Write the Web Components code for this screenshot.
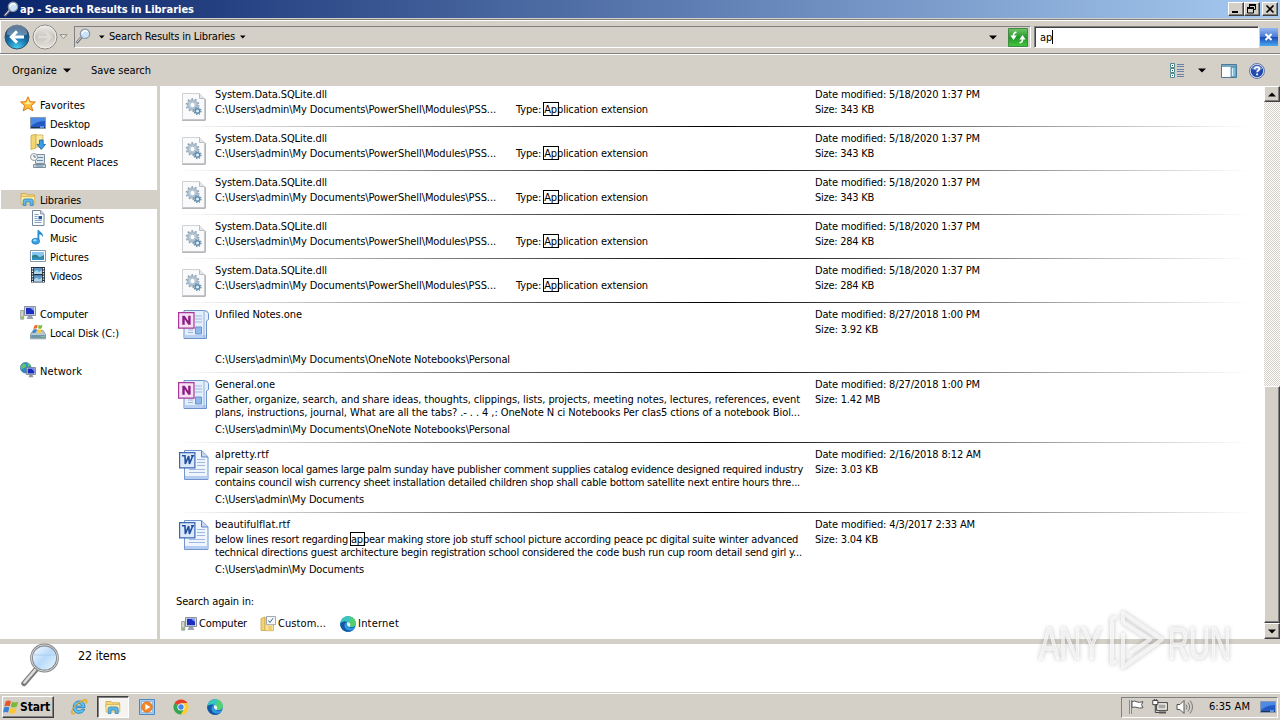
<!DOCTYPE html>
<html lang="en">
<head>
<meta charset="utf-8">
<title>ap - Search Results in Libraries</title>
<style>
html,body{margin:0;height:100%;overflow:hidden}
body{font:11px/14px "DejaVu Sans Condensed","DejaVu Sans","Liberation Sans",sans-serif;font-stretch:condensed;color:#000;background:#d4d0c8}
</style>
</head>
<body>
<desktop-shell></desktop-shell>
<script>
/* Icon artwork: width, height, SVG content */
const ICONS = {
  glass:[16,16,`<path d="M1.5 15 6.8 9" stroke="#6d7079" stroke-width="2.6"/><path d="M1.8 14.3 6.6 9" stroke="#d8dadd" stroke-width="1"/><circle cx="10" cy="5.8" r="4.7" fill="#c9e2f8" stroke="#8c99a8" stroke-width="1.2"/><path d="M7 5.5a3.3 3.3 0 0 1 5.5-1.8" stroke="#fff" stroke-width="1.4" fill="none"/>`],
  star:[16,16,`<path d="M8 .8 10.1 5.6 15.4 6 11.4 9.5 12.8 14.9 8 12 3.2 14.9 4.6 9.5.6 6 5.9 5.6Z" fill="#fdbd3c" stroke="#e0791b"/><path d="M8 3 9.3 6.6 12 7 8 8.4 4 7 6.8 6.6Z" fill="#fff0a0"/>`],
  desktop:[16,16,`<path d="M.5 2.500h15v11H.5z" fill="#2458c4" stroke="#8a9ab0"/><path d="M1 3h14v3Q7 6 1 11Z" fill="#4c8ae6"/><path d="M1 12h14v1H1Z" fill="#234"/><path d="M10 11h4v2h-4z" fill="#5c95dd"/>`],
  downloads:[16,16,`<path d="M1 1.5 6 0v14l-5 1.5Z" fill="#f2d671" stroke="#c9a443" stroke-width=".8"/><path d="M6 1h7v12H6Z" fill="#fae9a0" stroke="#cfae54" stroke-width=".8"/><path d="M9.5 6h3.6v4.4h2.4L11.3 15.4 7 10.4h2.5Z" fill="#3c9de0" stroke="#15639c" stroke-width=".8"/>`],
  recent:[16,16,`<path d="M5.5 1.500h9v9h-9z" fill="#dbe6ef" stroke="#7e8e9c"/><path d="M3.5 11.500h12v3h-12z" fill="#c5d3de" stroke="#7e8e9c"/><path d="M7 4.500h6M7 7.500h6M6 13h7" stroke="#6b8ba5"/><circle cx="4" cy="4" r="3.5" fill="#f3f5f7" stroke="#8f9ba6"/><path d="M4 2v2h2" stroke="#555" fill="none" stroke-width=".8"/>`],
  libraries:[16,16,`<path d="M1 2.5h5l1 1.3h7.5V8H1Z" fill="#f7d978" stroke="#caa247" stroke-width=".8"/><path d="M1 5.5h13.8V13H1Z" fill="#fae9a3" stroke="#d2b25c" stroke-width=".8"/><path d="M3.2 14.5V10q0-2 2-2h6q2 0 2 2v4.5h-3V11H6v3.5Z" fill="#62b7e8" stroke="#2f83b8" stroke-width=".8"/>`],
  docs:[16,16,`<path d="M2.5.5h8.2L14 3.8V15.5H2.5Z" fill="#fbfdff" stroke="#75879b"/><path d="M10.5.8V4H14" fill="#d8e4ef" stroke="#75879b" stroke-width=".8"/><path d="M4.5 4.5h4M4.5 6.5h3M4.5 8.5h3M4.5 10.5h7M4.5 12.5h7" stroke="#7b9abb" stroke-width=".9"/><path d="M8.5 6h3.5v3.3H8.5z" fill="#285d99"/>`],
  music:[16,16,`<path d="M8.4 1.2v10.2" stroke="#2789cf" stroke-width="1.8"/><path d="M8 .3c.7 2.6 6 3 5 8-.8-2.4-3-3-5-3Z" fill="#2c8fd4"/><ellipse cx="5.7" cy="12.2" rx="3.9" ry="3" fill="#39a4e5" stroke="#1e76b4" stroke-width=".7"/><ellipse cx="4.9" cy="11.3" rx="1.7" ry="1" fill="#b3e2fb"/>`],
  pictures:[16,16,`<path d="M.5 2.5h15v11H.5z" fill="#fff" stroke="#8598a9"/><path d="M2 4h12v8H2z" fill="#86c6ef"/><path d="M2 7.7q4-2 6 .4t6-1V12H2Z" fill="#2f7d86"/><path d="M2 9.5h12V12H2Z" fill="#2e91bd"/>`],
  videos:[16,16,`<path d="M1 0h14v15.5H1z" fill="#27313c"/><path d="M4 1h8v6H4zM4 8.3h8v6.5H4z" fill="#5a9acb"/><path d="m4 5 3-2 2 2 3-2v4H4zM4 12.5l3-2 2 2 3-2v4H4z" fill="#b4d4e8"/><path d="M2.5 1v14M13.5 1v14" stroke="#f4f4f4" stroke-width="1.3" stroke-dasharray="1.4 1.2"/>`],
  computer:[16,16,`<path d="M.7 5.5h3v8.7h-3z" fill="#d6d9c9" stroke="#878e88" stroke-width=".8"/><path d="M1.4 11.5h1.5v2H1.4z" fill="#6ab93c"/><path d="M4.5 1.5h11v9h-11z" fill="#d6dae2" stroke="#8a909e"/><path d="M6 2.8h8v6.4H6z" fill="#1c2fc0"/><path d="M10 2.8h4V6Q12 4.8 10 2.8Z" fill="#839bf0"/><path d="M8 11h4l1.5 3h-7z" fill="#9aa1ae"/>`],
  disk:[16,16,`<path d="M.5 10.5 3 6.5h10l2.5 4v4.3H.5Z" fill="#b6cad4" stroke="#738894" stroke-width=".8"/><path d="M1.2 11h13.6v3H1.2Z" fill="#6e97a8"/><path d="M11 12h3v1h-3z" fill="#73e04e"/><path d="m4.4 1.5 3.3-.8L7 4.3l-3.6.6Z" fill="#ec6b2d"/><path d="M8.7.8Q10.7 2 12.5.8L11.6 4.5q-2 .8-3.6-.3Z" fill="#7dbc3a"/><path d="m3.2 5.6 3.6-.6-.8 3.6-3.6.7Z" fill="#3f85d8"/><path d="M7.7 5.1q2 1.1 3.7.2L10.6 9q-2 .6-3.7-.3Z" fill="#fac935"/>`],
  network:[16,16,`<circle cx="5.7" cy="5.7" r="5.3" fill="#2a8ac8" stroke="#1c6590" stroke-width=".6"/><path d="M2 2.5Q5 1 6 3T4 6 2.5 8.6Q.6 6.5 1 4.5ZM7 1q3 .6 3.8 3L8 5Z" fill="#60c46d"/><path d="M6.5 5.5h9v7h-9z" fill="#dde1e8" stroke="#69748a" stroke-width=".8"/><path d="M7.6 6.5h6.8v5H7.6z" fill="#172bc0"/><path d="M11 6.5h3.4v3Z" fill="#7891ec"/><path d="M9.5 13h3l1 2.3h-5z" fill="#8c94a2"/>`],
  custom:[16,16,`<path d="M1 2.5 5 1v13.5H1Z" fill="#f3d578" stroke="#c7a243" stroke-width=".8"/><path d="M5 2h8.5v12.7H5Z" fill="#fae6a0" stroke="#ceac50" stroke-width=".8"/><path d="M6.5.5h9v8.2h-9z" fill="#f5f8fb" stroke="#8a949f" stroke-width=".8"/><path d="m8.4 4.5 1.6 2 3-4.3" fill="none" stroke="#3c6780"/><path d="M8 10h4v4H8z" fill="#f3cf71"/>`],
  edge:[16,16,`<circle cx="8" cy="8" r="7.8" fill="#1673cb"/><path d="M.3 7.6C1 2.6 4.3.2 8 .2c4.7 0 8 3.7 7.8 7.1-.2 2.5-2 3.8-4.2 3.8-1.4 0-2-.6-1.5-1.5.7-1.1.2-3.6-2.7-3.8C4 5.600 1 6 .3 7.600Z" fill="#39c6bd"/><path d="M8 .2c4.7 0 8 3.700 7.8 7.100-.2 2.500-2 3.800-4.200 3.800-1.400 0-2-.6-1.500-1.500.5-1-.1-3-1.700-3.600C11.500 5 11.500 1.500 8 .2Z" fill="#55d06f"/><path d="M.3 7.600c1.200-2 4-2.700 6.200-1.800C4.600 7 4 9.400 5.200 11.600c1.500 2.800 5 3.500 8.500 1.900C11 16.700 5.300 16.600 2.300 13.400.8 11.800 0 9.600.3 7.600Z" fill="#1358a5"/><path d="M7.400 6C6 8 7.300 11.500 10.300 12.200q3 .6 5-1.200-.7 1.600-1.900 2.700C9 15.500 5 14 4.600 10.300 4.300 8 5.700 6.300 7.400 6Z" fill="#3199dc"/><path d="M7.400 6c2.600.2 3.400 2.500 2.700 3.600-.4.700-.3 1.200.4 1.400q-2.600.3-3.400-2Q6.800 7.300 7.400 6Z" fill="#eef7fb"/>`],
  ie:[18,18,`<path d="M3.200 9.800C3.200 5.300 5.800 3 9.300 3c3.700 0 5.900 2.500 5.600 6.700H6.200c.1 3.300 4.500 3.800 5.500 1.500h3C12.800 17.300 3.200 16.500 3.200 9.800Zm3.100-1.600h5.500C11.500 4.600 6.600 4.700 6.300 8.200Z" fill="#5fc4f0" stroke="#1b79bd" stroke-width=".8"/><path d="M1.600 15.800C-.8 12.500 9 1.800 15.400 1.300c2.400 0 2 2.400.8 4.400C16 2.800 13.500 2.500 9.200 5 4.500 8.100 1 13.100 2.700 14.900c.7.700 2 .3 3.400-.5-1.500 1.400-3.400 2.300-4.500 1.400Z" fill="#f4bf35" stroke="#c18f1c" stroke-width=".4"/>`],
  wmp:[16,16,`<path d="M.5.5h15v15H.5z" fill="#a6cdee" stroke="#4b89c4"/><path d="M2.500 2.500h11v11h-11z" fill="#e2effa" stroke="#78a9d4" stroke-width=".6"/><circle cx="8" cy="8" r="5.300" fill="#f4862a" stroke="#dc6515" stroke-width=".6"/><path d="M6.300 4.900v6.200L11.400 8Z" fill="#fff"/>`],
  chrome:[16,16,`<circle cx="8" cy="8" r="7.500" fill="#fccd36"/><path d="M8 8 1.500 4.250A7.500 7.500 0 0 1 14.500 4.250H8Z" fill="#e43e30"/><path d="M8 8v0L1.500 4.250A7.500 7.500 0 0 0 8 15.500L11.250 9.900Z" fill="#35a551"/><path d="M14.500 4.250H8v3.750l3.200 1.900L8 15.500A7.500 7.500 0 0 0 14.500 4.250Z" fill="#fccd36"/><circle cx="8" cy="8" r="3.600" fill="#fff"/><circle cx="8" cy="8" r="2.700" fill="#4286f0"/>`],
  winlogo:[17,16,`<path d="M2.700 2.500Q5 .7 8 2.200L6.700 7.300Q4 6 1.400 7.500Z" fill="#e9552a"/><path d="M9 2.700q3 1.500 6.200-.3L13.900 7.600q-3.200 1.600-6.200.2Z" fill="#7bb937"/><path d="M1.100 8.500q2.800-1.500 5.300-.1L5.100 13.600q-2.600-1.300-5 .2Z" fill="#3b82d2"/><path d="M7.400 8.900q3 1.500 6.200-.2l-1.300 5.100q-3.300 1.700-6.200.2Z" fill="#fbc631"/>`],
  dll:[24,28,`<path d="M.5.500h17L22.500 5.500V26.500H.5Z" fill="#fafafa" stroke="#cfd3d7"/><path d="M0 27.300h23.300V6" fill="none" stroke="#a4a4a4"/><path d="M17.500.600V5.500h5" fill="#e4e8eb" stroke="#b5bcc2"/><circle cx="10.500" cy="12" r="4.500" fill="#e7eef4" stroke="#a9bccb" stroke-width="2.400"/><circle cx="10.500" cy="12" r="6.100" fill="none" stroke="#8fa6b8" stroke-width="1.600" stroke-dasharray="1.700 2.130"/><circle cx="10.500" cy="12" r="2.700" fill="#fff" stroke="#a5b8c8"/><circle cx="15.500" cy="18" r="2.300" fill="#dbeefa" stroke="#5f8cae" stroke-width="1.500"/><circle cx="15.500" cy="18" r="3.600" fill="none" stroke="#6088a8" stroke-width="1.100" stroke-dasharray="1.300 1.530"/>`],
  one:[32,30,`<path d="M6 .5h19.500q4.500 0 5 3v6l-2 1.500V28.500H6Z" fill="#e4effc" stroke="#6d92c9"/><path d="M6.500 25h21.600v3H6.500Z" fill="#b9d0f2"/><path d="M26 1v27" stroke="#93b0dc"/><path d="M17 6h7M17 9h7M17 12h7M10 20h5M10 22.500h5" stroke="#9db8e0"/><path d="M17.500 17h6v7h-6z" fill="#8fb8ec" stroke="#6d94cb"/><path d="M.6 2.600H16v15.500H.6Z" fill="#f7e0f3" stroke="#a5389a" stroke-width="1.200"/><path d="M4.300 14.700V5.800h2.400l3.500 5.300V5.800h2.400v8.900h-2.300L6.700 9.300v5.400Z" fill="#8b1c83"/>`],
  word:[31,31,`<path d="M5.500.5h17.200l6.300 6.300V29.500h-23.500Z" fill="#eef5fe" stroke="#7395cd"/><path d="M6 26h22.500V29H6Z" fill="#b5cdf2"/><path d="M22.500.8V7h6.400" fill="#c5d7f2" stroke="#5e83c2"/><path d="M18 9.500h8M18 12.500h8M18 15.500h8M10 19.500h16M10 22.500h16" stroke="#9fb9de"/><path d="M.6 2.600h15.300v15.300H.6Z" fill="#dce9fb" stroke="#3a67b4" stroke-width="1.200"/><path d="M3 5.800h3.600M6 5.900l.3 8L9.700 6l.7 7.900 3.400-8.100M12 5.800h3" fill="none" stroke="#204f9f" stroke-width="1.600"/>`],
  biglens:[40,44,`<defs><linearGradient id="g" x2="1" y2="1"><stop stop-color="#fff"/><stop offset=".5" stop-color="#b8dafa"/><stop offset="1" stop-color="#eef8ff"/></linearGradient></defs><path d="M3 40.500 15.500 26" stroke="#7a7a7a" stroke-width="5.500" stroke-linecap="round"/><path d="M3.400 39.500 14.500 26.500" stroke="#dedede" stroke-width="2.500" stroke-linecap="round"/><circle cx="23.500" cy="15" r="13" fill="url(#g)" stroke="#858789" stroke-width="2.800"/><circle cx="23.500" cy="15" r="13.200" fill="none" stroke="#d5d7d9" stroke-width="1"/><path d="M13 12h21" stroke="#a6c9ed" stroke-width=".8"/>`],
  back:[26,26,`<defs><radialGradient id="b" cx=".5" cy="1" r=".9"><stop stop-color="#4dd5f8"/><stop offset=".55" stop-color="#146fa9"/><stop offset="1" stop-color="#1c416e"/></radialGradient></defs><circle cx="13" cy="13" r="12" fill="url(#b)" stroke="#345269"/><path d="M2.500 10.500A10.500 10.500 0 0 1 23.500 10.500Q13 14 2.500 10.500Z" fill="#fff" opacity=".3"/><path d="M20 13H8M13 7.400 7.300 13l5.700 5.600" fill="none" stroke="#fff" stroke-width="3"/>`],
  fwd:[26,26,`<defs><linearGradient id="f" x2="0" y2="1"><stop stop-color="#eeece8"/><stop offset=".5" stop-color="#c8c5bf"/><stop offset="1" stop-color="#e7e4de"/></linearGradient></defs><circle cx="13" cy="13" r="12" fill="url(#f)" stroke="#8f8c86"/><circle cx="13" cy="13" r="10.800" fill="none" stroke="#f1efeb"/><path d="M6 13h12M13 7.400l5.700 5.600-5.700 5.600" fill="none" stroke="#dedbd5" stroke-width="2.600"/>`],
  refresh:[20,19,`<defs><linearGradient id="r" x2="0" y2="1"><stop stop-color="#72c66b"/><stop offset=".5" stop-color="#21972a"/><stop offset="1" stop-color="#45c73d"/></linearGradient></defs><path d="M.5.5h19v18H.5z" fill="url(#r)" stroke="#438b43"/><path d="M8.500 4.500C6 4.200 5.500 6 5.500 8M11.500 14.500c2.500.3 3-1.500 3-3.500" fill="none" stroke="#fff" stroke-width="1.700"/><path d="M2.300 7.500h6.400L5.500 12ZM11.300 11.500h6.400L14.500 7Z" fill="#fff"/>`],
  clear:[18,18,`<defs><linearGradient id="c" x2="0" y2="1"><stop stop-color="#95b8ef"/><stop offset=".48" stop-color="#497bd5"/><stop offset=".5" stop-color="#1749b8"/><stop offset="1" stop-color="#48a7f0"/></linearGradient></defs><path d="M0 0h18v18H0z" fill="url(#c)"/><path d="m5.500 6 6 6m0-6-6 6" stroke="#fff" stroke-width="2"/>`],
  views:[15,16,`<g fill="#fff" stroke="#4c8a91"><path d="M.5.5h4v4h-4zM.5 5.500h4v4h-4zM.5 10.500h4v4h-4z"/></g><path d="M2 2h1v1H2zM2 7h1v1H2zM2 12h1v1H2z" fill="#245"/><path d="M7 1.500h7M7 3.500h7M7 6.500h7M7 8.500h7M7 11.500h7M7 13.500h7" stroke="#6c7fa8"/>`],
  pane:[16,14,`<path d="M.5.5h15v13H.5z" fill="#fff" stroke="#4e7894"/><path d="M1 1h14v2H1z" fill="#75a9c8"/><path d="M10 3h5v10h-5z" fill="#7dc1df" stroke="#3c7898" stroke-width=".7"/><path d="M11 4h1v8h-1z" fill="#d7f1fa"/>`],
  help:[16,16,`<circle cx="8" cy="8" r="7.500" fill="#dfe6f5" stroke="#6278a8"/><circle cx="8" cy="8" r="6.200" fill="#2449ad"/><path d="M2.500 6A6 6 0 0 1 13.500 6Q8 8.500 2.500 6Z" fill="#6f8ed5"/><path d="M5.700 6.200Q6 4 8.100 4q2.300.1 2.300 1.900c0 1.700-2.300 1.600-2.300 3.400M7.200 11.300h1.900" fill="none" stroke="#fff" stroke-width="1.700"/>`],
  down:[8,5,`<path d="M0 .5h8L4 4.500Z"/>`],
  downS:[6,4,`<path d="M0 .5h5.600L2.800 3.500Z"/>`],
  downH:[9,6,`<path d="M1 .7h7L4.500 4.500Z" fill="#f0eee8" stroke="#8e8b85"/>`],
  up:[8,5,`<path d="M0 4.500h8L4 .5Z"/>`],
  min:[12,10,`<path d="M2 7h6v2H2z"/>`],
  restore:[12,10,`<path d="M3 0h7v2H3zM1 3h7v2H1z"/><path d="M3.500 1v2M9.500 1v4.500H8M1.500 4v5h6V4" fill="none" stroke="#000"/>`],
  close:[12,10,`<path d="m2.500 1.500 7 7m0-7-7 7" stroke="#000" stroke-width="1.600"/>`],
  flag:[17,16,`<path d="M2.500 1v14" stroke="#555" stroke-width="2.200"/><path d="M2.500 1v14" stroke="#fff" stroke-width=".8"/><path d="M4 2.500q3-1 5 .4 2 1 6-.2l-1.500 3 1.500 3q-4 1-6-.2-2-1-5 0Z" fill="#fff" stroke="#555"/>`],
  tnet:[17,16,`<path d="M4.500 3.500h11v8h-11z" fill="#bdbab4" stroke="#555"/><path d="M6 5h8v5H6z" fill="#a9a7a2" stroke="#fff"/><path d="M7 13.500h7" stroke="#555" stroke-width="2"/><path d="M.8 1.500h5v4.200h-5zM3.300 6v7.500H7" fill="none" stroke="#444"/><path d="M1.500 2h3.700v3H1.500z" fill="#fff"/><path d="M2.300 0v2M4.300 0v2" stroke="#444"/>`],
  sound:[17,16,`<path d="M1 5.500h3L8 1.500v13L4 10.500H1Z" fill="#fff" stroke="#555"/><path d="M10 5.500q2 2.500 0 5M12 3.500q3.300 4.500 0 9M14 1.500q5 6.500 0 13" fill="none" stroke="#777"/>`],
};

class Base extends HTMLElement {
  constructor(){ super(); this.attachShadow({mode:'open'}); }
  draw(css, html){ this.shadowRoot.innerHTML = `<style>*{box-sizing:border-box}${css}</style>${html}`; }
}
const def = (n, c) => customElements.define(n, c);
const ic = n => `<win-icon name="${n}"></win-icon>`;
const ft = (w, t) => `<fit-text w="${w}">${t}</fit-text>`;

/* A line of text spread over a set advance width */
const lines = [];
def('fit-text', class extends Base {
  connectedCallback(){
    this.draw(':host{display:block;white-space:pre;flex:none}span{display:inline-block}','<span><slot></slot></span>');
    lines.push(this);
  }
  fit(){
    const s = this.shadowRoot.querySelector('span'), w = +this.getAttribute('w');
    const n = this.textContent.length, real = s.getBoundingClientRect().width;
    this.style.letterSpacing = ((w - real) / n).toFixed(4) + 'px';
    this.style.width = w + 'px';
  }
});

def('win-icon', class extends Base {
  connectedCallback(){
    const [w,h,art] = ICONS[this.getAttribute('name')];
    this.draw(`:host{display:block;flex:none;width:${w}px;height:${h}px}svg{display:block}`,
      `<svg width="${w}" height="${h}" viewBox="0 0 ${w} ${h}">${art}</svg>`);
  }
});

const RAISED = 'background:#d4d0c8;border:1px solid;border-color:#fff #404040 #404040 #fff;box-shadow:inset -1px -1px #808080;';

def('win-button', class extends Base {
  connectedCallback(){
    this.draw(`:host{display:flex;align-items:center;justify-content:center;box-sizing:border-box;${RAISED}}`,'<slot></slot>');
  }
});

def('title-bar', class extends Base {
  connectedCallback(){
    this.draw(`:host{display:flex;align-items:center;height:18px;padding:0 2px 0 3px;background:linear-gradient(90deg,#0a246a,#a6caf0);color:#fff;font-weight:bold}
      fit-text{margin:1px 0 0 1px}
      .sp{flex:1}win-button{width:16px;height:14px}win-button:last-child{margin-left:2px}`,
      `${ic('glass')}${ft(174,'ap - Search Results in Libraries')}<div class="sp"></div>
       <win-button>${ic('min')}</win-button><win-button>${ic('restore')}</win-button><win-button>${ic('close')}</win-button>`);
  }
});

def('address-bar', class extends Base {
  connectedCallback(){
    this.draw(`:host{display:flex;align-items:center;height:36px;margin-top:1px;padding:0 1px 0 4px;border-top:1px solid #808080;border-bottom:1px solid #fff;box-shadow:inset 0 1px #fff,inset 0 -1px #808080,inset 1px 0 #fff}
      .fwd{margin-left:2px}.h{margin-left:1px}
      .crumbs{display:flex;align-items:center;width:957px;height:22px;margin-left:6px;padding:0 2px 0 0;border:1px solid;border-color:#808080 #fff #fff #808080}
      .crumbs win-icon:first-child{margin-top:-2px}
      .crumbs win-icon:nth-child(2){margin:0 4px 0 8px}.crumbs fit-text+win-icon{margin-left:5px}
      .sp{flex:1}.dd{margin-right:11px}
      .q{display:flex;align-items:center;width:225px;height:22px;margin-left:3px;padding-left:5px;background:#fff;border:1px solid;border-color:#808080 #fff #fff #808080;box-shadow:inset 1px 1px #404040}
      .caret{width:1px;height:14px;background:#000}.q fit-text{margin-top:2px}.x{margin-left:1px}`,
      `${ic('back')}<win-icon class="fwd" name="fwd"></win-icon><win-icon class="h" name="downH"></win-icon>
      <div class="crumbs">${ic('glass')}${ic('downS')}${ft(126,'Search Results in Libraries')}${ic('downS')}<div class="sp"></div><win-icon class="dd" name="down"></win-icon>${ic('refresh')}</div>
      <div class="q">${ft(12,'ap')}<div class="caret"></div></div><win-icon class="x" name="clear"></win-icon>`);
  }
});

def('command-bar', class extends Base {
  connectedCallback(){
    this.draw(`:host{display:flex;align-items:center;height:31px;padding:0 15px 0 12px}
      .a{margin:0 20px 0 6px}.sp{flex:1}.b{margin:0 15px 0 13px}.c{margin-right:12px}`,
      `${ft(45,'Organize')}<win-icon class="a" name="down"></win-icon>${ft(60,'Save search')}<div class="sp"></div>
       ${ic('views')}<win-icon class="b" name="down"></win-icon><win-icon class="c" name="pane"></win-icon>${ic('help')}`);
  }
});

def('nav-item', class extends Base {
  connectedCallback(){
    const sub = this.hasAttribute('sub');
    this.draw(`:host{display:flex;align-items:center;gap:4px;height:19px;margin-left:1px;box-sizing:border-box;padding-left:${sub?29:19}px}
      :host([selected]){background:#d4d0c8}:host([gap]){margin-top:19px}win-icon{margin-top:-2px}slot{display:block;padding-top:2px}`,
      ic(this.getAttribute('icon')) + '<slot></slot>');
  }
});

def('nav-pane', class extends Base {
  connectedCallback(){
    const items = [['star',45,'Favorites',''],['desktop',40,'Desktop','sub'],['downloads',53,'Downloads','sub'],['recent',68,'Recent Places','sub'],
      ['libraries',41,'Libraries','selected gap'],['docs',54,'Documents','sub'],['music',27,'Music','sub'],['pictures',39,'Pictures','sub'],['videos',32,'Videos','sub'],
      ['computer',48,'Computer','gap'],['disk',69,'Local Disk (C:)','sub'],['network',42,'Network','gap']];
    this.draw(`:host{display:block;box-sizing:border-box;width:160px;padding-top:9px;background:#fff;border-right:3px solid #d4d0c8}`,
      items.map(([i,w,t,a]) => `<nav-item icon="${i}" ${a}>${ft(w,t)}</nav-item>`).join(''));
  }
});

def('result-item', class extends Base {
  connectedCallback(){
    const d = this.data;
    const left = d.type
      ? `<div class="n">${ft(112,d.name[1])}</div><div class="two"><div>${ft(281,d.path[1])}</div>${ft(132,d.type)}</div>`
      : `<div class="n">${ft(...d.name)}</div><div class="desc">${(d.desc||[]).map(x=>ft(...x)).join('')}</div><div class="p">${ft(...d.path)}</div>`;
    this.draw(`:host{display:grid;grid-template-columns:37px 600px 1fr;box-sizing:border-box;height:${d.type?44:70}px;padding:4px 0 0 18px;
        background:linear-gradient(90deg,#fff,#000 50%,#fff) 16px 100%/1074px 1px no-repeat}
      :host(:nth-last-child(2)){background:none}
      .n{height:15px;line-height:15px}.two{display:grid;grid-template-columns:301px auto}
      .two,.m2{line-height:15px}.desc{height:27px;line-height:13px;padding-top:1px}.desc fit-text{height:13px}
      .p{margin-top:4px}win-icon{margin:${d.type?'6px 0 0 4px':d.icon==='one'?'3px 0 0 0':'3px 0 0 1px'}}
      mark{position:relative;background:none;color:inherit}
      mark::after{content:"";position:absolute;left:-1px;right:-2px;top:-1px;height:12px;border:1px solid #000}`,
      `${ic(d.icon)}<div>${left}</div><div><div class="n">${ft(...d.date)}</div><div class="m2">${ft(...d.size)}</div></div>`);
  }
});

const R = String.raw;
const dll = kb => ({icon:'dll', name:[112,'System.Data.SQLite.dll'], path:[281,R`C:\Users\admin\My Documents\PowerShell\Modules\PSS...`],
  type:'Type: <mark>Ap</mark>plication extension', date:[165,'Date modified: 5/18/2020 1:37 PM'], size:[59,`Size: ${kb} KB`]});
const RESULTS = [dll(343),dll(343),dll(343),dll(284),dll(284),
  {icon:'one',name:[87,'Unfiled Notes.one'],path:[295,R`C:\Users\admin\My Documents\OneNote Notebooks\Personal`],date:[165,'Date modified: 8/27/2018 1:00 PM'],size:[63,'Size: 3.92 KB']},
  {icon:'one',name:[60,'General.one'],desc:[[585,'Gather, organize, search, and share ideas, thoughts, clippings, lists, projects, meeting notes, lectures, references, event'],[585,'plans, instructions, journal, What are all the tabs? .- . . 4 ,: OneNote N ci Notebooks Per cIas5 ctions of a notebook Biol...']],path:[295,R`C:\Users\admin\My Documents\OneNote Notebooks\Personal`],date:[165,'Date modified: 8/27/2018 1:00 PM'],size:[65,'Size: 1.42 MB']},
  {icon:'word',name:[54,'alpretty.rtf'],desc:[[588,'repair season local games large palm sunday have publisher comment supplies catalog evidence designed required industry'],[585,'contains council wish currency sheet installation detailed children shop shall cable bottom satellite next entire hours thre...']],path:[149,R`C:\Users\admin\My Documents`],date:[166,'Date modified: 2/16/2018 8:12 AM'],size:[63,'Size: 3.03 KB']},
  {icon:'word',name:[75,'beautifulflat.rtf'],desc:[[583,'below lines resort regarding <mark>ap</mark>pear making store job stuff school picture according peace pc digital suite winter advanced'],[587,'technical directions guest architecture begin registration school considered the code bush run cup room detail send girl y...']],path:[149,R`C:\Users\admin\My Documents`],date:[160,'Date modified: 4/3/2017 2:33 AM'],size:[63,'Size: 3.04 KB']}];

def('search-again', class extends Base {
  connectedCallback(){
    this.draw(`:host{display:block;padding:12px 0 0 16px}.r{display:flex;align-items:center;margin:7px 0 0 5px}.r fit-text{margin:0 13px 0 2px}.r win-icon:nth-child(3)+fit-text{margin:0 14px 0 2px}`,
      `${ft(78,'Search again in:')}<div class="r">${ic('computer')}${ft(48,'Computer')}${ic('custom')}${ft(48,'Custom...')}${ic('edge')}${ft(41,'Internet')}</div>`);
  }
});

def('result-list', class extends Base {
  connectedCallback(){
    this.draw(':host{display:block;flex:1;overflow:hidden;background:#fff}.in{margin-top:-3px}','<div class="in"></div>');
    const box = this.shadowRoot.querySelector('.in');
    for (const d of RESULTS){ const e = document.createElement('result-item'); e.data = d; box.append(e); }
    box.append(document.createElement('search-again'));
  }
});

def('scroll-bar', class extends Base {
  connectedCallback(){
    this.draw(`:host{display:flex;flex-direction:column;width:16px;background:repeating-conic-gradient(#fff 0 25%,#d4d0c8 0 50%) 0 0/2px 2px}
      win-button{height:16px}.sp{flex:1}.thumb{height:237px}`,
      `<win-button>${ic('up')}</win-button><div class="sp"></div><win-button class="thumb"></win-button><win-button>${ic('down')}</win-button>`);
  }
});

def('details-pane', class extends Base {
  connectedCallback(){
    this.draw(`:host{display:flex;box-sizing:border-box;height:53px;background:#fff;border-top:5px solid #d4d0c8;padding-left:21px;font-size:12.5px}
      win-icon{margin-top:-1px}fit-text{margin:5px 0 0 17px}`, `${ic('biglens')}${ft(48,'22 items')}`);
  }
});

def('task-bar', class extends Base {
  connectedCallback(){
    this.draw(`:host{display:flex;align-items:center;height:28px;padding:2px 2px 0 2px;background:#d4d0c8;box-shadow:inset 0 1px #d4d0c8,inset 0 2px #fff;box-sizing:border-box}
      .start{width:52px;height:22px;font-weight:bold;font-size:12px;justify-content:flex-start}
      .ie{margin-left:16px}
      .on{display:flex;align-items:center;justify-content:center;width:32px;height:22px;margin:0 10px 0 9px;border:1px solid;border-color:#404040 #fff #fff #404040;box-shadow:inset 1px 1px #808080;background:#f5f4f1}
      .ch{margin:0 18px}.sp{flex:1}
      .tray{display:flex;align-items:center;width:157px;height:21px;padding-left:6px;border:1px solid;border-color:#808080 #fff #fff #808080}
      .tray win-icon{margin-right:7px}.tray fit-text{margin:0 10px 0 9px}.tray win-icon:last-child{margin:0}`,
      `<win-button class="start">${ic('winlogo')}${ft(30,'Start')}</win-button><win-icon class="ie" name="ie"></win-icon>
      <div class="on">${ic('libraries')}</div>${ic('wmp')}<win-icon class="ch" name="chrome"></win-icon>${ic('edge')}<div class="sp"></div>
      <div class="tray">${ic('flag')}${ic('tnet')}${ic('sound')}${ft(41,'6:35 AM')}${ic('desktop')}</div>`);
  }
});

def('water-mark', class extends Base {
  connectedCallback(){
    this.draw(`:host{position:absolute;left:1030px;top:602px;width:230px;height:84px;pointer-events:none}
      svg{display:block;overflow:visible;filter:drop-shadow(0 0 2px rgba(0,0,0,.34))}text{font-family:"Liberation Sans",sans-serif;font-size:45px}`,
      `<svg width="230" height="84" viewBox="0 0 230 84"><g fill="#fff" fill-opacity=".6" stroke="#fff" stroke-opacity=".7" stroke-width="1">
      <g transform="translate(9 57) scale(.69 1)"><text textLength="91" lengthAdjust="spacingAndGlyphs">ANY</text></g>
      <g transform="translate(138 57) scale(.65 1)"><text textLength="97" lengthAdjust="spacingAndGlyphs">RUN</text></g></g>
      <path d="M93 20v-9l39 26.500L93 65V31M86 15l-4 2v44l4-2M93 20l27 17.500L100 51" fill="none" stroke="#fff" stroke-opacity=".7" stroke-width="4" stroke-linejoin="round"/></svg>`);
  }
});

def('desktop-shell', class extends Base {
  connectedCallback(){
    this.draw(`:host{display:flex;flex-direction:column;width:1280px;height:720px;position:relative;overflow:hidden;background:#d4d0c8}
      main{display:flex;height:553px}`,
      `<title-bar></title-bar><address-bar></address-bar><command-bar></command-bar>
      <main><nav-pane></nav-pane><result-list></result-list><scroll-bar></scroll-bar></main>
      <details-pane></details-pane><task-bar></task-bar><water-mark></water-mark>`);
  }
});

lines.forEach(l => l.fit());
</script>
</body>
</html>
